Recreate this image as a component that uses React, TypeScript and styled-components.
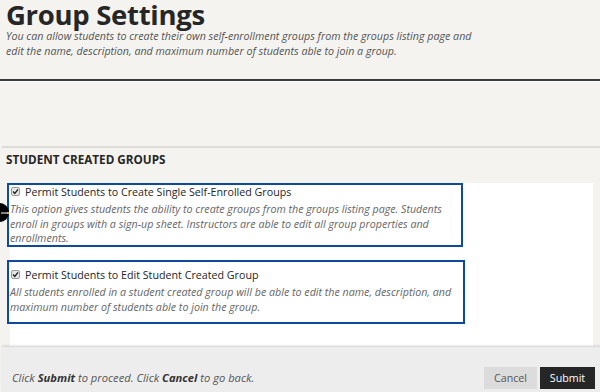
import React from "react";
import styled, { createGlobalStyle } from "styled-components";

const Global = createGlobalStyle`
  html, body { margin: 0; padding: 0; }
  body { background: #f4f3ef; font-family: "Open Sans", "Liberation Sans", sans-serif; }
`;

const Page = styled.div`
  position: relative;
  width: 600px;
  height: 392px;
  overflow: hidden;
  background: #f4f3ef;
  display: flex;
  flex-direction: column;
`;

const Header = styled.header`
  padding: 0 0 0 6px;
`;

const Title = styled.h1`
  margin: 0;
  font-size: 27.5px;
  line-height: 30px;
  font-weight: 700;
  letter-spacing: -0.3px;
  color: #262626;
`;

const Intro = styled.p`
  margin: -1px 0 0 0;
  width: 475px;
  font-size: 10.7px;
  line-height: 15px;
  font-style: italic;
  color: #555;
`;

const DarkRule = styled.div`
  margin: 20px 0 0 -1px;
  height: 2px;
  background: #3a3a3a;
  border-bottom: 1px solid #ffffff;
`;

const SectionRule = styled.div`
  margin: 64px 0 0 2px;
  height: 2px;
  background: #dedcd8;
`;

const SectionTitle = styled.h2`
  margin: 0;
  padding: 4px 0 0 6px;
  height: 35px;
  box-sizing: border-box;
  font-size: 11.7px;
  line-height: 15px;
  font-weight: 700;
  color: #262626;
  text-transform: uppercase;
`;

const Panel = styled.div`
  flex: 1;
  margin: 0 7px 0 10px;
  background: #ffffff;
  display: flex;
  flex-direction: column;
  gap: 13px;
`;

const Option = styled.div<{ $w: number; $pad: number }>`
  margin-left: -3px;
  width: ${(p) => p.$w}px;
  height: 64px;
  box-sizing: border-box;
  border: 2px solid #0e4a9b;
  background: #ffffff;
  padding: ${(p) => p.$pad}px 0 0 1px;
`;

const LabelRow = styled.label`
  display: flex;
  align-items: center;
  gap: 5px;
  height: 13px;
  padding-left: 1px;
  font-size: 10.7px;
  color: #262626;
`;

const Box = styled.span`
  width: 9px;
  height: 9px;
  box-sizing: border-box;
  border: 1px solid #9a9a9a;
  border-radius: 2px;
  background: #e6e6e6;
  display: inline-flex;
  align-items: center;
  justify-content: center;
`;

const Desc = styled.p`
  margin: 4px 0 0 0;
  font-size: 10.7px;
  line-height: 14.5px;
  font-style: italic;
  color: #666;
`;

const Footer = styled.footer`
  height: 46px;
  margin-left: 2px;
  box-sizing: border-box;
  background: #ededed;
  border-top: 1px solid #dadada;
  box-shadow: 0 -1px 2px rgba(0, 0, 0, 0.08);
  display: flex;
  align-items: flex-end;
  justify-content: space-between;
  padding: 0 5px 3px 10px;
`;

const Hint = styled.span`
  font-size: 11.2px;
  font-style: italic;
  color: #555;
  padding-bottom: 4px;
  b { font-weight: 700; color: #333; }
`;

const Buttons = styled.div`
  display: flex;
  gap: 3px;
`;

const Btn = styled.button<{ $primary?: boolean }>`
  height: 22px;
  padding: 0;
  width: ${(p) => (p.$primary ? "55px" : "53px")};
  border: none;
  font-family: "Open Sans", "Liberation Sans", sans-serif;
  font-size: 10.7px;
  background: ${(p) => (p.$primary ? "#262626" : "#dcdcdc")};
  color: ${(p) => (p.$primary ? "#ffffff" : "#555")};
`;

const Marker = styled.div`
  position: absolute;
  left: -10px;
  top: 203px;
  width: 19px;
  height: 19px;
  border-radius: 50%;
  background: #000;
  display: flex;
  align-items: center;
  justify-content: flex-end;
`;

const Check = () => (
  <svg width="7" height="7" viewBox="0 0 7 7">
    <path d="M1 3.6 L2.8 5.4 L6 1.4" stroke="#222" strokeWidth="1.4" fill="none" />
  </svg>
);

export default function App() {
  return (
    <Page>
      <Global />
      <Header>
        <Title>Group Settings</Title>
        <Intro>
          You can allow students to create their own self-enrollment groups from the groups listing page and
          edit the name, description, and maximum number of students able to join a group.
        </Intro>
      </Header>
      <DarkRule />
      <SectionRule />
      <SectionTitle>Student Created Groups</SectionTitle>
      <Panel>
        <Option $w={456} $pad={0}>
          <LabelRow>
            <Box><Check /></Box>
            Permit Students to Create Single Self-Enrolled Groups
          </LabelRow>
          <Desc>
            This option gives students the ability to create groups from the groups listing page. Students
            enroll in groups with a sign-up sheet. Instructors are able to edit all group properties and
            enrollments.
          </Desc>
        </Option>
        <Option $w={458} $pad={6}>
          <LabelRow>
            <Box><Check /></Box>
            Permit Students to Edit Student Created Group
          </LabelRow>
          <Desc>
            All students enrolled in a student created group will be able to edit the name, description, and
            maximum number of students able to join the group.
          </Desc>
        </Option>
      </Panel>
      <Footer>
        <Hint>
          Click <b>Submit</b> to proceed. Click <b>Cancel</b> to go back.
        </Hint>
        <Buttons>
          <Btn>Cancel</Btn>
          <Btn $primary>Submit</Btn>
        </Buttons>
      </Footer>
      <Marker>
        <svg width="8" height="4" viewBox="0 0 8 4">
          <path d="M0 2 H7" stroke="#fff" strokeWidth="1" />
          <circle cx="7" cy="2" r="1" fill="#ffc040" />
        </svg>
      </Marker>
    </Page>
  );
}
